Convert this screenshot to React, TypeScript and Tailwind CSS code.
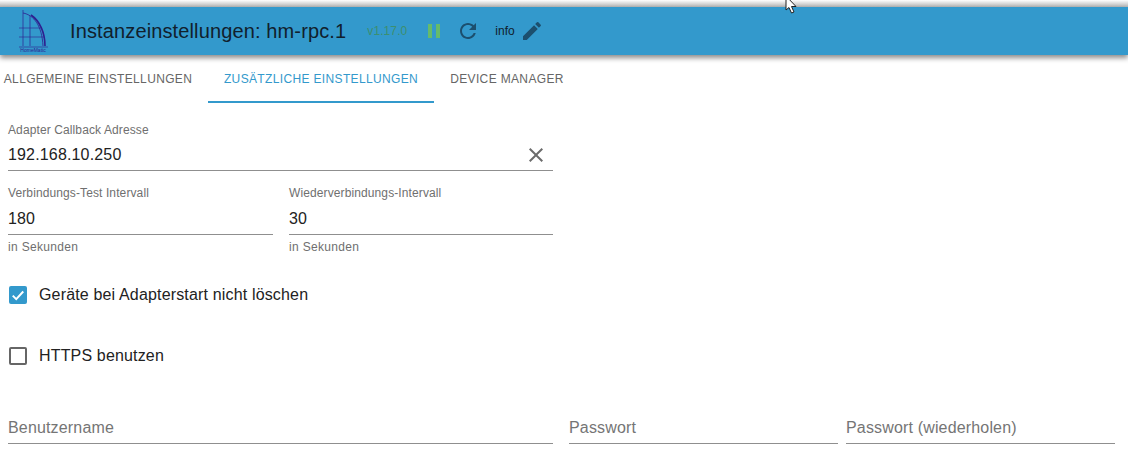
import React from 'react';

const TABS = [
  { label: 'Allgemeine Einstellungen', active: false, width: 'w-[196px] mr-[12px]' },
  { label: 'Zusätzliche Einstellungen', active: true, width: 'w-[226px]' },
  { label: 'Device Manager', active: false, width: 'w-[146px]' },
];

const Field: React.FC<{
  label?: string;
  value?: string;
  placeholder?: string;
  helper?: string;
  className?: string;
  rowClassName?: string;
  clear?: boolean;
}> = ({ label, value, placeholder, helper, className, rowClassName = 'h-[33px] pt-[2px]', clear }) => (
  <div className={className}>
    {label && <div className="h-[16px] text-[12px] leading-[16px] tracking-[0.11px] text-[#6f6f6f]">{label}</div>}
    <div className={`flex items-center justify-between border-b border-[#8f8f8f] text-[16px] tracking-[0.16px] ${rowClassName}`}>
      {placeholder ? (
        <span className="text-[#757575]">{placeholder}</span>
      ) : (
        <span className="text-[#222222]">{value}</span>
      )}
      {clear && (
        <svg width="24" height="24" viewBox="0 0 24 24" className="mr-[5px] fill-[#6b6b6b]">
          <path d="M19 6.41 17.59 5 12 10.59 6.41 5 5 6.41 10.59 12 5 17.59 6.41 19 12 13.41 17.59 19 19 17.59 13.41 12z" />
        </svg>
      )}
    </div>
    {helper && <div className="mt-[4px] text-[12px] leading-[16px] tracking-[0.33px] text-[#6f6f6f]">{helper}</div>}
  </div>
);

const Logo = () => (
  <svg width="32" height="42" viewBox="0 0 32 42" fill="none" stroke="#2f1f8f" className="shrink-0">
    <path d="M6 0V36M13 6V36" strokeWidth="0.7" />
    <path d="M6 3C17 5 25 16 26 36" strokeWidth="0.8" />
    <path d="M14 5C23 11 28 23 28 36" strokeWidth="1.6" />
    <path d="M2 18H25M2 27H27" strokeWidth="0.6" />
    <path d="M2 37H31" strokeWidth="0.6" />
    <text x="16" y="41.5" textAnchor="middle" fontSize="5" fill="#2f1f8f" stroke="none" fontFamily="Liberation Sans">
      HomeMatic
    </text>
  </svg>
);

export default function App() {
  return (
    <div className="relative h-[461px] w-[1128px] overflow-hidden bg-white font-['Liberation_Sans',sans-serif]">
      {/* Top strip */}
      <div className="h-[7px] bg-gradient-to-b from-white to-[#b5b5b5]" />

      {/* Header */}
      <div className="flex h-[48px] items-center bg-[#3399cc] pl-[17px] shadow-[0_3px_5px_rgba(0,0,0,0.45)]">
        <Logo />
        <span className="ml-[21px] text-[20px] tracking-[0.13px] text-[#11202c]">Instanzeinstellungen: hm-rpc.1</span>
        <span className="ml-[21px] text-[12px] tracking-[0.1px] text-[#3d8f6f]">v1.17.0</span>
        <span className="ml-[21px] flex gap-[4px]">
          <span className="h-[14px] w-[4px] bg-[#66bb6a]" />
          <span className="h-[14px] w-[4px] bg-[#66bb6a]" />
        </span>
        <svg width="24" height="24" viewBox="0 0 24 24" className="ml-[16px] fill-[#1c4f6e]">
          <path d="M17.65 6.35C16.2 4.9 14.21 4 12 4c-4.42 0-7.99 3.58-7.99 8s3.57 8 7.99 8c3.73 0 6.84-2.55 7.73-6h-2.08c-.82 2.33-3.04 4-5.65 4-3.31 0-6-2.69-6-6s2.69-6 6-6c1.66 0 3.14.69 4.22 1.78L13 11h7V4l-2.35 2.35z" />
        </svg>
        <span className="ml-[15px] text-[12px] text-[#11202c]">info</span>
        <svg width="24" height="24" viewBox="0 0 24 24" className="ml-[5px] fill-[#1c4f6e]">
          <path d="M3 17.25V21h3.75L17.81 9.94l-3.75-3.75L3 17.25zM20.71 7.04c.39-.39.39-1.02 0-1.41l-2.34-2.34a.996.996 0 0 0-1.41 0l-1.83 1.83 3.75 3.75 1.83-1.83z" />
        </svg>
      </div>

      {/* Tabs */}
      <div className="flex h-[48px]">
        {TABS.map((tab) => (
          <div
            key={tab.label}
            className={`flex items-center justify-center border-b-2 pt-[2px] text-[12px] uppercase tracking-[0.35px] ${tab.width} ${
              tab.active ? 'border-[#3399cc] text-[#3399cc]' : 'border-transparent text-[#666666]'
            }`}
          >
            {tab.label}
          </div>
        ))}
      </div>

      {/* Form */}
      <div className="px-[8px] pt-[19px]">
        <Field label="Adapter Callback Adresse" value="192.168.10.250" clear className="w-[545px]" />

        <div className="mt-[14px] flex w-[545px] gap-[16px]">
          <Field
            label="Verbindungs-Test Intervall"
            value="180"
            helper="in Sekunden"
            rowClassName="h-[34px] pt-[3px]"
            className="w-[265px]"
          />
          <Field
            label="Wiederverbindungs-Intervall"
            value="30"
            helper="in Sekunden"
            rowClassName="h-[34px] pt-[3px]"
            className="w-[264px]"
          />
        </div>

        <div className="ml-[1px] mt-[25px] flex h-[30px] items-center gap-[12px] text-[16px] tracking-[0.16px] text-[#222222]">
          <span className="flex h-[18px] w-[18px] items-center justify-center rounded-[2px] bg-[#3399cc]">
            <svg width="14" height="14" viewBox="0 0 24 24" fill="none" stroke="white" strokeWidth="3.4">
              <path d="M3 13l6 6L21 6" />
            </svg>
          </span>
          Geräte bei Adapterstart nicht löschen
        </div>

        <div className="ml-[1px] mt-[31px] flex h-[30px] items-center gap-[12px] text-[16px] tracking-[0.16px] text-[#222222]">
          <span className="h-[18px] w-[18px] rounded-[2px] border-2 border-[#666666]" />
          HTTPS benutzen
        </div>

        <div className="mt-[40px] flex">
          <Field placeholder="Benutzername" className="w-[545px]" />
          <Field placeholder="Passwort" className="ml-[16px] w-[269px]" />
          <Field placeholder="Passwort (wiederholen)" className="ml-[8px] w-[269px]" />
        </div>
      </div>

      {/* Mouse cursor */}
      <svg width="14" height="16" viewBox="0 0 14 16" className="absolute left-[785px] top-0">
        <path d="M1 -4V10L4 7.5L6.5 13L9 12L6.5 6.5H11Z" fill="white" stroke="#222222" strokeWidth="1" />
      </svg>
    </div>
  );
}
